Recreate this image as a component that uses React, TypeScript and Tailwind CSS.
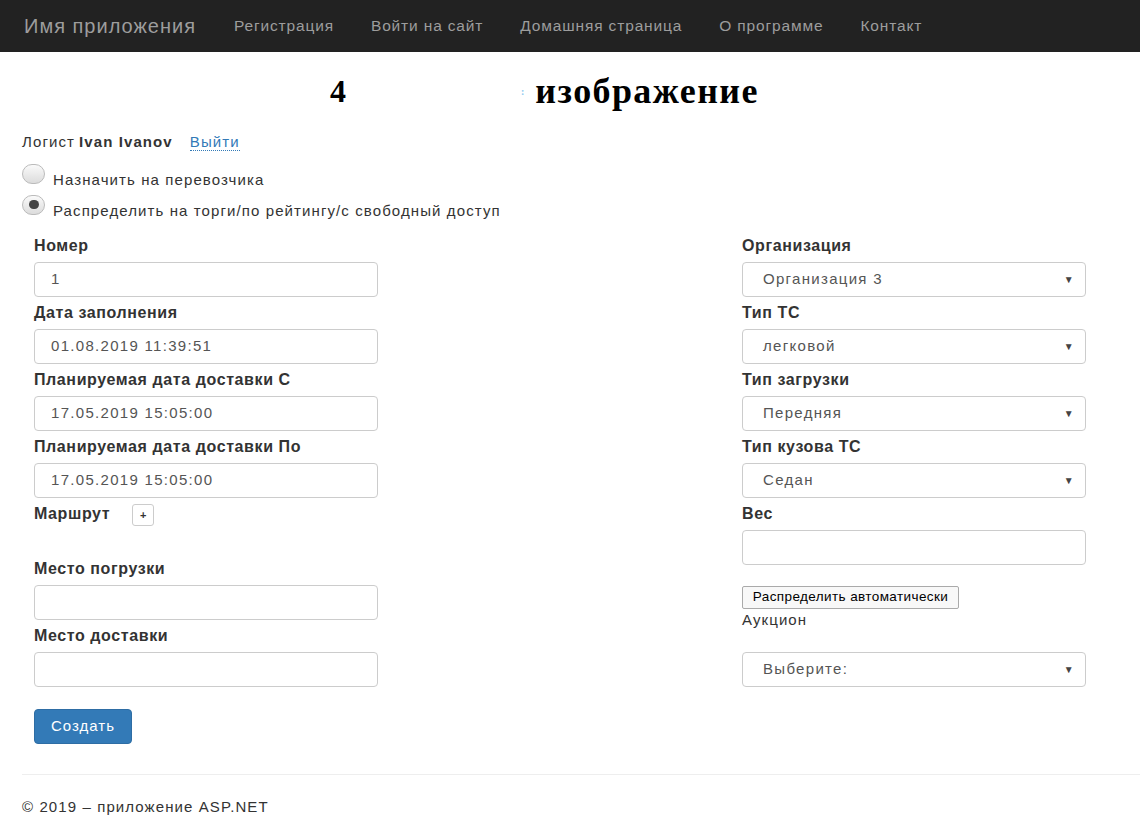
import { ReactNode } from "react";

const font = { fontFamily: '"Liberation Sans", Arial, sans-serif' };

const Label = ({ children }: { children: ReactNode }) => (
  <div className="h-5 leading-5 text-[16px] font-bold text-[#333] tracking-[0.6px]">{children}</div>
);

const Input = ({ value = "" }: { value?: string }) => (
  <div className="mt-1.5 mb-1.5 flex h-[35px] w-[344px] items-center rounded border border-[#ccc] px-4 text-[15px] text-[#555] tracking-[1.3px]">
    {value}
  </div>
);

const Select = ({ value }: { value: string }) => (
  <div className="mt-1.5 mb-1.5 flex h-[35px] w-[344px] items-center justify-between rounded border border-[#ccc] pl-5 pr-2.5 text-[15px] text-[#555] tracking-[1.3px]">
    <span>{value}</span>
    <span className="text-[10px] text-[#444]">▼</span>
  </div>
);

export default function App() {
  return (
    <div className="min-h-[825px] bg-white text-[#333]" style={font}>
      {/* шапка */}
      <nav className="flex h-[52px] items-center bg-[#222] pl-6 text-[#9d9d9d]">
        <span className="mr-[38px] text-[20px] tracking-[1px]">Имя приложения</span>
        <div className="flex gap-[37px] text-[15.5px] tracking-[0.85px]">
          <span>Регистрация</span>
          <span>Войти на сайт</span>
          <span>Домашняя страница</span>
          <span>О программе</span>
          <span>Контакт</span>
        </div>
      </nav>

      <main className="px-[22px]">
        {/* заголовок */}
        <div className="flex h-[76px] items-center pt-[2px] font-bold text-black" style={{ fontFamily: '"Liberation Serif", "Times New Roman", serif' }}>
          <span className="ml-[308px] text-[32px]">4</span>
          <span className="ml-[175px] mr-[11px] text-[10px] text-[#8cc8ee]">:</span>
          <span className="text-[36px] tracking-[1.4px]">изображение</span>
        </div>

        <div className="mt-[4px] flex h-5 items-center text-[15px] tracking-[1.1px]">
          <span>Логист</span>
          <span className="ml-1 font-bold">Ivan Ivanov</span>
          <span className="ml-[17px] border-b border-dotted border-[#337ab7] leading-4 text-[#337ab7]">Выйти</span>
        </div>

        <div className="mt-[17px] flex flex-col gap-[8px] text-[15px] tracking-[1.1px]">
          <div className="flex items-center">
            <span className="-mt-3 mr-2 h-[20px] w-[23px] rounded-full border border-[#bbb] bg-gradient-to-b from-[#fafafa] to-[#dcdcdc]" />
            <span>Назначить на перевозчика</span>
          </div>
          <div className="flex items-center">
            <span className="-mt-3 mr-2 flex h-[20px] w-[23px] items-center justify-center rounded-full border border-[#bbb] bg-gradient-to-b from-[#fafafa] to-[#dcdcdc]">
              <span className="h-[9px] w-[10px] rounded-full bg-[#444]" />
            </span>
            <span>Распределить на торги/по рейтингу/с свободный доступ</span>
          </div>
        </div>

        {/* форма */}
        <div className="mt-[14px] flex gap-[364px] pl-3">
          <div className="flex flex-col">
            <Label>Номер</Label>
            <Input value="1" />
            <Label>Дата заполнения</Label>
            <Input value="01.08.2019 11:39:51" />
            <Label>Планируемая дата доставки С</Label>
            <Input value="17.05.2019 15:05:00" />
            <Label>Планируемая дата доставки По</Label>
            <Input value="17.05.2019 15:05:00" />
            <div className="flex h-[22px] items-start">
              <Label>Маршрут</Label>
              <span className="ml-[22px] flex h-[22px] w-[22px] items-center justify-center rounded-[3px] border border-[#ccc] text-[11px] font-bold text-[#333]">+</span>
            </div>
            <div className="h-[33px]" />
            <Label>Место погрузки</Label>
            <Input />
            <Label>Место доставки</Label>
            <Input />
            <button className="mt-[16px] h-[35px] w-[98px] rounded border border-[#2e6da4] bg-[#337ab7] text-[15px] text-white tracking-[1px]">
              Создать
            </button>
          </div>

          <div className="flex flex-col">
            <Label>Организация</Label>
            <Select value="Организация 3" />
            <Label>Тип ТС</Label>
            <Select value="легковой" />
            <Label>Тип загрузки</Label>
            <Select value="Передняя" />
            <Label>Тип кузова ТС</Label>
            <Select value="Седан" />
            <Label>Вес</Label>
            <Input />
            <button className="mt-[15px] h-[23px] w-[217px] rounded-[2px] border border-[#aaa] bg-[#f8f8f8] text-[13.5px] text-black tracking-[0.4px]">
              Распределить автоматически
            </button>
            <div className="h-5 leading-5 mt-[1px] text-[15px] tracking-[1.1px]">Аукцион</div>
            <div className="h-[16px]" />
            <Select value="Выберите:" />
          </div>
        </div>

        <hr className="mt-[30px] -mr-[22px] border-t border-[#eee]" />
        <footer className="mt-[21px] text-[15px] tracking-[1.1px]">© 2019 – приложение ASP.NET</footer>
      </main>
    </div>
  );
}
